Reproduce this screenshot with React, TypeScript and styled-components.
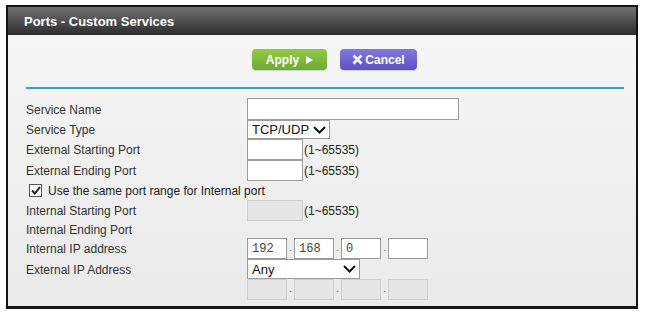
import styled, { createGlobalStyle } from 'styled-components';

const GlobalStyle = createGlobalStyle`
  body {
    margin: 0;
    background: #ffffff;
    font-family: "Liberation Sans", Arial, sans-serif;
  }
`;

const Frame = styled.div`
  margin: 5px 0 0 6px;
  width: 632px;
  height: 304px;
  box-sizing: border-box;
  border: 2px solid #141414;
  border-bottom-width: 3px;
  background: linear-gradient(#f7f7f7, #eaeaea);
  display: flex;
  flex-direction: column;
`;

const Header = styled.div`
  height: 28px;
  padding-left: 16px;
  display: flex;
  align-items: center;
  background: linear-gradient(#727272, #3a3a3a 80%, #2c2c2c);
  color: #ffffff;
  font-size: 13px;
  font-weight: bold;
`;

const Toolbar = styled.div`
  display: flex;
  gap: 13px;
  padding: 14px 0 0 244px;
`;

const ActionButton = styled.button<{ $variant: 'apply' | 'cancel' }>`
  width: ${({ $variant }) => ($variant === 'apply' ? '75px' : '77px')};
  height: 21px;
  padding: 0;
  border: none;
  border-radius: 4px;
  display: flex;
  align-items: center;
  justify-content: center;
  gap: ${({ $variant }) => ($variant === 'apply' ? '7px' : '2px')};
  color: #ffffff;
  font-family: "Liberation Sans", Arial, sans-serif;
  font-size: 12px;
  font-weight: bold;
  background: ${({ $variant }) =>
		$variant === 'apply'
			? 'linear-gradient(#93c94a, #6fab2c)'
			: 'linear-gradient(#8378dc, #5d52c2)'};
  box-shadow: 0 1px 1px rgba(0, 0, 0, 0.15);
`;

const Divider = styled.div`
  margin: 17px 12px 0 18px;
  height: 2px;
  background: #2ba4d6;
`;

const Form = styled.div`
  margin: 9px 0 0 18px;
  display: flex;
  flex-direction: column;
`;

const Row = styled.div<{ $h: number }>`
  height: ${({ $h }) => $h}px;
  display: flex;
  align-items: center;
`;

const Label = styled.div`
  width: 221px;
  font-size: 12px;
  color: #333333;
  padding-top: 1px;
`;

const Field = styled.div`
  display: flex;
  align-items: center;
  height: 100%;
`;

const TextBox = styled.input<{ $w: number }>`
  width: ${({ $w }) => $w}px;
  height: 100%;
  box-sizing: border-box;
  margin: 0;
  padding: 0 0 0 4px;
  border: 1px solid ${({ disabled }) => (disabled ? '#cfcfcf' : '#9c9c9c')};
  background: ${({ disabled }) => (disabled ? '#e6e6e6' : '#ffffff')};
  font-family: "Liberation Mono", "Courier New", monospace;
  font-size: 12px;
  color: #444444;
  outline: none;
`;

const Hint = styled.span`
  margin-left: 1px;
  font-size: 12px;
  color: #222222;
`;

const SelectBox = styled.div<{ $w: number }>`
  width: ${({ $w }) => $w}px;
  height: 100%;
  box-sizing: border-box;
  border: 1px solid #9c9c9c;
  background: #ffffff;
  padding: 0 3px 0 4px;
  display: flex;
  align-items: center;
  justify-content: space-between;
  font-size: 13px;
  color: #111111;
`;

const IpGroup = styled.div`
  display: flex;
  height: 100%;
`;

const Dot = styled.span`
  width: 7px;
  display: flex;
  align-items: flex-end;
  justify-content: center;
  padding-bottom: 3px;
  box-sizing: border-box;
  font-size: 11px;
  color: #777777;
`;

const CheckRow = styled.label`
  display: flex;
  align-items: center;
  gap: 6px;
  margin-left: 3px;
  font-size: 12px;
  color: #222222;
`;

const CheckBox = styled.span`
  width: 13px;
  height: 13px;
  box-sizing: border-box;
  border: 1px solid #555555;
  background: #ffffff;
  display: flex;
  align-items: center;
  justify-content: center;
`;

const Chevron = () => (
	<svg width="13" height="8" viewBox="0 0 13 8">
		<polyline points="1,1 6.5,6.5 12,1" fill="none" stroke="#111" strokeWidth="2" />
	</svg>
);

const IpInputs = ({ values, disabled }: { values: string[]; disabled?: boolean }) => (
	<IpGroup>
		{values.map((v, i) => (
			<Field key={i}>
				{i > 0 && <Dot>.</Dot>}
				<TextBox $w={40} defaultValue={v} disabled={disabled} />
			</Field>
		))}
	</IpGroup>
);

export default function App() {
	return (
		<>
			<GlobalStyle />
			<Frame>
				<Header>Ports - Custom Services</Header>
				<Toolbar>
					<ActionButton $variant="apply">
						<span>Apply</span>
						<svg width="7" height="8" viewBox="0 0 7 8">
							<polygon points="0,0 7,4 0,8" fill="#fff" />
						</svg>
					</ActionButton>
					<ActionButton $variant="cancel">
						<svg width="11" height="11" viewBox="0 0 11 11">
							<path d="M1.5 1.5 L9.5 9.5 M9.5 1.5 L1.5 9.5" stroke="#fff" strokeWidth="2.6" />
						</svg>
						<span>Cancel</span>
					</ActionButton>
				</Toolbar>
				<Divider />
				<Form>
					<Row $h={22}>
						<Label>Service Name</Label>
						<Field><TextBox $w={212} /></Field>
					</Row>
					<Row $h={19}>
						<Label>Service Type</Label>
						<Field>
							<SelectBox $w={83}>
								<span>TCP/UDP</span>
								<Chevron />
							</SelectBox>
						</Field>
					</Row>
					<Row $h={21}>
						<Label>External Starting Port</Label>
						<Field><TextBox $w={56} /><Hint>(1~65535)</Hint></Field>
					</Row>
					<Row $h={21}>
						<Label>External Ending Port</Label>
						<Field><TextBox $w={56} /><Hint>(1~65535)</Hint></Field>
					</Row>
					<Row $h={19}>
						<CheckRow>
							<CheckBox>
								<svg width="10" height="9" viewBox="0 0 10 9">
									<polyline points="1,4.5 3.8,7.5 9,1" fill="none" stroke="#222" strokeWidth="2" />
								</svg>
							</CheckBox>
							Use the same port range for Internal port
						</CheckRow>
					</Row>
					<Row $h={21}>
						<Label>Internal Starting Port</Label>
						<Field><TextBox $w={56} disabled /><Hint>(1~65535)</Hint></Field>
					</Row>
					<Row $h={17}>
						<Label>Internal Ending Port</Label>
					</Row>
					<Row $h={21}>
						<Label>Internal IP address</Label>
						<IpInputs values={['192', '168', '0', '']} />
					</Row>
					<Row $h={20}>
						<Label>External IP Address</Label>
						<Field>
							<SelectBox $w={113}>
								<span>Any</span>
								<Chevron />
							</SelectBox>
						</Field>
					</Row>
					<Row $h={21}>
						<Label />
						<IpInputs values={['', '', '', '']} disabled />
					</Row>
				</Form>
			</Frame>
		</>
	);
}
